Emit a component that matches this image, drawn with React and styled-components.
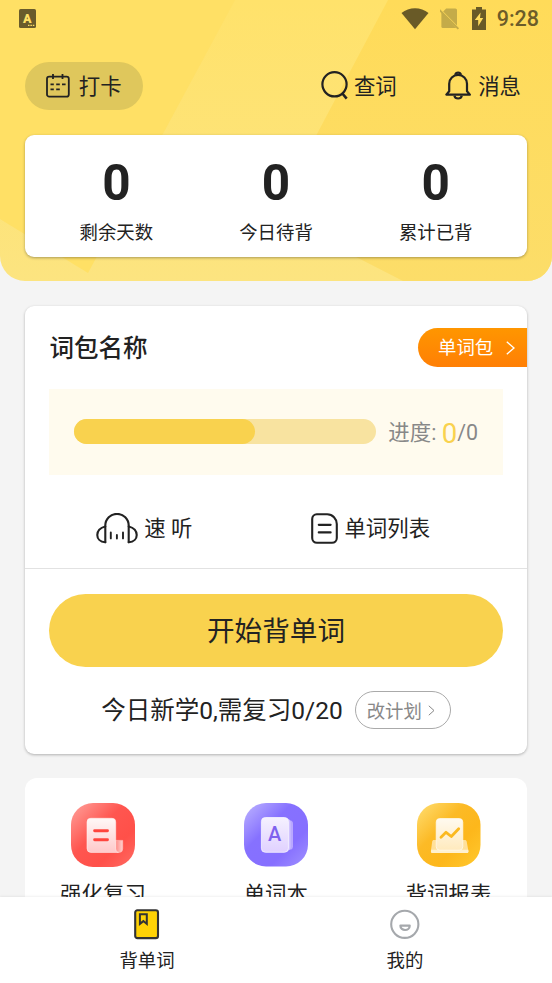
import styled, { createGlobalStyle } from 'styled-components';

const stats = [
  { value: 0, label: '剩余天数' },
  { value: 0, label: '今日待背' },
  { value: 0, label: '累计已背' },
];

const CalendarIcon = () => (
  <svg width="24" height="24" viewBox="0 0 24 24" fill="none" stroke="#222" strokeWidth="1.8">
    <rect x="1" y="2.6" width="21.8" height="20" rx="2.2" />
    <path d="M7 0v5M16.5 0v5" />
    <path d="M4.5 10.4h3.3M10.2 10.4h3.6M16 10.4h3.6M4.5 15.3h3.3M10.2 15.3h3.6" />
  </svg>
);

const SearchIcon = () => (
  <svg width="27" height="29" viewBox="0 0 27 29" fill="none" stroke="#222" strokeWidth="2.2">
    <circle cx="13.5" cy="13.3" r="12.1" />
    <path d="M20.9 22l4.8 5.6" strokeWidth="2.6" />
  </svg>
);

const BellIcon = () => (
  <svg width="27" height="29" viewBox="0 0 27 29" fill="none" stroke="#222" strokeWidth="2.2" strokeLinejoin="round">
    <path d="M10.2 3.8a3 3 0 0 1 5.8 0" />
    <path d="M4.2 20.2v-7.5a8.9 8.9 0 0 1 17.8 0v7.5l2.9 3.4H1.3z" />
    <path d="M9.4 24.8c.8 3.6 6.6 3.6 7.4 0" />
  </svg>
);

const HeadphoneIcon = () => (
  <svg width="42" height="31" viewBox="0 0 42 31" fill="none" stroke="#222" strokeWidth="2.1" strokeLinecap="round" strokeLinejoin="round">
    <path d="M9.3 29.3V12.6a11.7 11.7 0 0 1 23.4 0v16.7" />
    <path d="M9.3 13.4C-1.4 15.8-1.4 28.6 9.3 29.3" />
    <path d="M32.7 13.4c10.7 2.4 10.7 15.2 0 15.9" />
    <path d="M14.8 19.4v6M20.9 21.9v3.6M27 19.4v6" strokeWidth="1.9" />
  </svg>
);

const ListIcon = () => (
  <svg width="27" height="31" viewBox="0 0 27 31" fill="none" stroke="#222" strokeWidth="2.1" strokeLinecap="round">
    <path d="M5.8 1.2h10.4c5.4 0 9.6 4.6 9.6 9.8V25a4.8 4.8 0 0 1-4.8 4.8H6A4.8 4.8 0 0 1 1.2 25V6a4.8 4.8 0 0 1 4.6-4.8z" />
    <path d="M7.8 11.8h11.8M7.8 19.4h11.8" strokeWidth="2.2" />
  </svg>
);

const ChevronIcon = ({ width, height, strokeWidth = 1.4 }) => (
  <svg width={width} height={height} viewBox={`0 0 ${width} ${height}`} fill="none" stroke="currentColor" strokeWidth={strokeWidth}>
    <path d={`M.8.8L${width - 1} ${height / 2}L.8 ${height - 0.8}`} />
  </svg>
);

const AppBadgeIcon = () => (
  <svg width="17" height="19" viewBox="0 0 17 19">
    <rect width="17" height="19" rx="1.6" fill="#695b2b" />
    <text x="8.2" y="13.6" textAnchor="middle" fontFamily="Roboto" fontSize="12.5" fontWeight="900" fill="#ffe066">A</text>
    <path d="M9 16.4h1.5M11.4 16.4h1.5M13.8 16.4h1.5" stroke="#ffe066" strokeWidth="1.3" />
  </svg>
);

const WifiIcon = () => (
  <svg width="28" height="22" viewBox="0 0 28 22" fill="#695a27">
    <path d="M.5 4.9C8-1.4 20-1.4 27.5 4.9L14 21.3z" />
  </svg>
);

const NoSimIcon = () => (
  <svg width="21" height="22" viewBox="0 0 21 22">
    <path d="M6.2.4h9.2A1.6 1.6 0 0 1 17 2v15.6L3.2 3.4z" fill="#c4ab49" />
    <path d="M1.4 4.2v14.4a1.5 1.5 0 0 0 1.5 1.5h13.4z" fill="#c4ab49" />
    <path d="M-.6 1.9l19 19" stroke="#c4ab49" strokeWidth="1.9" />
  </svg>
);

const BatteryIcon = () => (
  <svg width="14" height="23" viewBox="0 0 14 23">
    <path d="M4 0h6v2.4h4V23H0V2.4h4z" fill="#695a27" />
    <path d="M8.6 5.4L2.8 13h3.4v6.2l5-8.3H8z" fill="#ffdc5c" />
  </svg>
);

const ReviewIcon = () => (
  <svg width="64" height="64" viewBox="0 0 64 64">
    <defs>
      <linearGradient id="reviewBg" x1="0" y1="0" x2="1" y2="1">
        <stop offset="0" stopColor="#ffa39d" />
        <stop offset=".42" stopColor="#ff5650" />
        <stop offset=".7" stopColor="#ff5049" />
        <stop offset="1" stopColor="#ff6c64" />
      </linearGradient>
      <linearGradient id="reviewPaper" x1="0" y1="0" x2="0" y2="1">
        <stop offset="0" stopColor="#fff8f7" />
        <stop offset="1" stopColor="#ffc9ca" />
      </linearGradient>
      <linearGradient id="reviewCurl" x1="0" y1="0" x2="1" y2="0">
        <stop offset="0" stopColor="#ff8984" />
        <stop offset="1" stopColor="#ffd0cf" />
      </linearGradient>
    </defs>
    <rect width="64" height="64" rx="22" fill="url(#reviewBg)" />
    <path d="M44.5 37.4h7.2v8.4a3.6 3.6 0 0 1-7.2 0z" fill="url(#reviewCurl)" stroke="#ffc2c0" strokeWidth=".6" />
    <path d="M19.8 15.3h21.3a3.6 3.6 0 0 1 3.6 3.6v27c0 1.8 1 3.4 2.8 3.5H20a4 4 0 0 1-4-4V19a3.7 3.7 0 0 1 3.8-3.7z" fill="url(#reviewPaper)" stroke="#fff0ef" strokeWidth=".6" />
    <path d="M23.6 27.7h12.9M23.6 36.7h12.9" stroke="#ff453e" strokeWidth="2.9" strokeLinecap="round" />
  </svg>
);

const WordBookIcon = () => (
  <svg width="64" height="64" viewBox="0 0 64 64">
    <defs>
      <linearGradient id="bookBg" x1="0" y1="0" x2="1" y2="1">
        <stop offset="0" stopColor="#beb5ff" />
        <stop offset=".38" stopColor="#8671ff" />
        <stop offset=".7" stopColor="#866fff" />
        <stop offset="1" stopColor="#a092ff" />
      </linearGradient>
      <linearGradient id="bookPage" x1="0" y1="0" x2="0" y2="1">
        <stop offset="0" stopColor="#f5f1ff" />
        <stop offset="1" stopColor="#e0d1ff" />
      </linearGradient>
    </defs>
    <rect width="64" height="63.5" rx="22" fill="url(#bookBg)" />
    <rect x="28" y="17.2" width="21" height="29.6" rx="3.5" fill="#b9a8ff" />
    <rect x="26" y="15.8" width="20.5" height="32" rx="3.8" fill="#d1c4ff" />
    <rect x="17.4" y="14.5" width="27" height="34.8" rx="4" fill="url(#bookPage)" stroke="#f8f5ff" strokeWidth=".8" />
    <text x="30.6" y="38" textAnchor="middle" fontFamily="Roboto" fontSize="20" fontWeight="500" fill="#7f62ee">A</text>
  </svg>
);

const ReportIcon = () => (
  <svg width="64" height="64" viewBox="0 0 64 64">
    <defs>
      <linearGradient id="reportBg" x1="0" y1="0" x2="1" y2="1">
        <stop offset="0" stopColor="#ffdf74" />
        <stop offset=".38" stopColor="#fcba26" />
        <stop offset=".65" stopColor="#fdb71b" />
        <stop offset="1" stopColor="#ffc92f" />
      </linearGradient>
      <linearGradient id="reportPaper" x1="0" y1="0" x2="0" y2="1">
        <stop offset="0" stopColor="#fffaf0" />
        <stop offset="1" stopColor="#ffeabd" />
      </linearGradient>
    </defs>
    <rect width="63.5" height="64" rx="22" fill="url(#reportBg)" />
    <path d="M17 37h30.8c1 0 1.7.7 1.9 1.6l1.7 9.5c.2 1-.5 1.8-1.5 1.8H15.4c-1 0-1.7-.8-1.5-1.8l1.3-9.5c.1-1 .8-1.6 1.8-1.6z" fill="#ffe09a" />
    <path d="M14.2 46.8h37l.3 1.8c0 .8-.6 1.5-1.4 1.5H15.3c-.9 0-1.4-.7-1.3-1.5z" fill="#fff1cf" />
    <rect x="19.2" y="15.5" width="26.6" height="31.7" rx="3.6" fill="url(#reportPaper)" stroke="#fffaf0" strokeWidth=".7" />
    <path d="M24 34.2l5-4.9 5.3 4.2 7.4-7.8" fill="none" stroke="#fbb91f" strokeWidth="2.8" strokeLinecap="round" strokeLinejoin="round" />
  </svg>
);

const BookTabIcon = () => (
  <svg width="26" height="31" viewBox="0 0 26 31" fill="none" stroke="#333" strokeWidth="2.1">
    <rect x="1.2" y="1.3" width="22.8" height="27.8" rx="2.2" fill="#ffd205" />
    <path d="M5.9 5.3h6.9v9.6l-3.4-2.8-3.5 2.8z" strokeWidth="2" />
  </svg>
);

const MineTabIcon = () => (
  <svg width="30" height="31" viewBox="0 0 30 31" fill="none" stroke="#a5a8ac" strokeWidth="2.1">
    <circle cx="14.8" cy="15.3" r="13.6" />
    <path d="M10.4 16.7h9.3c0 5.7-9.3 5.7-9.3 0z" strokeWidth="2.2" strokeLinejoin="round" />
  </svg>
);

const HeaderPattern = () => (
  <Pattern viewBox="0 0 552 281" preserveAspectRatio="none">
    <defs>
      <linearGradient id="band" x1="0" y1="0" x2="0" y2="1">
        <stop offset="0" stopColor="#ffe26b" />
        <stop offset="1" stopColor="#fce480" />
      </linearGradient>
      <linearGradient id="right" x1="0" y1="0" x2="0" y2="1">
        <stop offset="0" stopColor="#ffdb59" />
        <stop offset="1" stopColor="#fcdd69" />
      </linearGradient>
    </defs>
    <rect width="552" height="281" fill="url(#band)" />
    <path d="M0 0h235L88 273L0 219z" fill="#ffe065" />
    <path d="M388 0h164v281H403L274 215z" fill="url(#right)" />
  </Pattern>
);

const features = [
  { label: '强化复习', Icon: ReviewIcon },
  { label: '单词本', Icon: WordBookIcon },
  { label: '背词报表', Icon: ReportIcon },
];

const App = () => {
  return (
    <>
      <GlobalStyle />
      <Screen>
        <Content>
          <Header>
            <HeaderPattern />
            <StatusBar>
              <AppBadgeIcon />
              <StatusIcons>
                <WifiIcon />
                <NoSimIcon />
                <BatteryIcon />
                <Clock>9:28</Clock>
              </StatusIcons>
            </StatusBar>
            <Toolbar>
              <CheckIn>
                <CalendarIcon />
                <Label>打卡</Label>
              </CheckIn>
              <ToolbarLinks>
                <ToolbarLink>
                  <SearchIcon />
                  <Label>查词</Label>
                </ToolbarLink>
                <ToolbarLink>
                  <BellIcon />
                  <Label>消息</Label>
                </ToolbarLink>
              </ToolbarLinks>
            </Toolbar>
            <StatsCard>
              {stats.map((item) => (
                <Stat key={item.label}>
                  <StatValue>{item.value}</StatValue>
                  <StatLabel>{item.label}</StatLabel>
                </Stat>
              ))}
            </StatsCard>
          </Header>

          <PlanCard>
            <PlanHead>
              <PlanTitle>词包名称</PlanTitle>
              <PackTag>
                单词包
                <ChevronIcon width={9} height={14} />
              </PackTag>
            </PlanHead>
            <ProgressBox>
              <ProgressTrack>
                <ProgressFill style={{ width: '60%' }} />
              </ProgressTrack>
              <ProgressText>
                进度: <ProgressDone>0</ProgressDone>/0
              </ProgressText>
            </ProgressBox>
            <Actions>
              <Action>
                <HeadphoneIcon />
                <Label>速 听</Label>
              </Action>
              <Action>
                <ListIcon />
                <Label>单词列表</Label>
              </Action>
            </Actions>
            <StartArea>
              <StartButton>开始背单词</StartButton>
              <TodayRow>
                <Label>今日新学0,需复习0/20</Label>
                <EditPlan>
                  <Label>改计划</Label>
                  <ChevronIcon width={7} height={11} strokeWidth={1} />
                </EditPlan>
              </TodayRow>
            </StartArea>
          </PlanCard>

          <FeatureCard>
            {features.map(({ label, Icon }) => (
              <Feature key={label}>
                <Icon />
                <FeatureLabel>{label}</FeatureLabel>
              </Feature>
            ))}
          </FeatureCard>
        </Content>
        <TabBar>
          <Tab>
            <BookTabIcon />
            背单词
          </Tab>
          <Tab>
            <MineTabIcon />
            我的
          </Tab>
        </TabBar>
      </Screen>
    </>
  );
};

const GlobalStyle = createGlobalStyle`
  * {
    box-sizing: border-box;
  }
  body {
    margin: 0;
    background: #f4f4f4;
    color: #222;
    font-family: Roboto, 'Noto Sans CJK SC', sans-serif;
  }
  svg {
    display: block;
    flex-shrink: 0;
  }
  button {
    border: 0;
    padding: 0;
    font-family: inherit;
    color: inherit;
  }
`;

const Screen = styled.div`
  display: flex;
  flex-direction: column;
  width: 552px;
  height: 983px;
  overflow: hidden;
`;

const Content = styled.main`
  flex: 1;
  min-height: 0;
  overflow: hidden;
`;

const Header = styled.header`
  position: relative;
  isolation: isolate;
  height: 281px;
  border-radius: 0 0 25px 25px;
  overflow: hidden;
`;

const Pattern = styled.svg`
  position: absolute;
  inset: 0;
  z-index: -1;
  width: 100%;
  height: 100%;
`;

const StatusBar = styled.div`
  display: flex;
  align-items: center;
  justify-content: space-between;
  height: 37px;
  padding: 0 13px 0 19px;
`;

const StatusIcons = styled.div`
  display: flex;
  align-items: center;
  gap: 11px;
`;

const Clock = styled.span`
  padding-top: 1px;
  font-size: 21.5px;
  font-weight: 500;
  line-height: 24px;
  color: #6c5c29;
`;

const Toolbar = styled.div`
  display: flex;
  align-items: center;
  justify-content: space-between;
  height: 47.5px;
  margin-top: 25px;
  padding: 0 31px 0 24.5px;
`;

const CheckIn = styled.button`
  display: flex;
  align-items: center;
  justify-content: center;
  gap: 9px;
  width: 118.5px;
  height: 47.5px;
  border-radius: 24px;
  background: #dfc75c;
  font-size: 21.4px;
  line-height: 32px;
`;

const Label = styled.span`
  padding-top: 2px;
`;

const ToolbarLinks = styled.div`
  display: flex;
  gap: 48.5px;
`;

const ToolbarLink = styled.div`
  display: flex;
  align-items: center;
  gap: 6px;
  font-size: 21.4px;
  line-height: 32px;
`;

const StatsCard = styled.section`
  display: flex;
  height: 122px;
  margin: 25.5px 25px 0 24.5px;
  padding: 0 11.5px 0 12px;
  border-radius: 9px;
  background: #fff;
  box-shadow: 0 1px 3px rgba(0, 0, 0, 0.32);
`;

const Stat = styled.div`
  flex: 1;
  display: flex;
  flex-direction: column;
  align-items: center;
`;

const StatValue = styled.span`
  margin-top: 19px;
  font-size: 49.5px;
  font-weight: 700;
  line-height: 58px;
`;

const StatLabel = styled.span`
  margin-top: 7px;
  font-size: 18.4px;
  line-height: 28px;
`;

const PlanCard = styled.section`
  height: 448px;
  margin: 25px 25px 0 24.5px;
  border-radius: 9px;
  background: #fff;
  box-shadow: 0 1px 3px rgba(0, 0, 0, 0.28);
`;

const PlanHead = styled.div`
  display: flex;
  align-items: center;
  justify-content: space-between;
  padding: 22px 0 0 25px;
`;

const PlanTitle = styled.h1`
  margin: 0;
  padding-top: 2px;
  font-size: 24.5px;
  font-weight: 500;
  line-height: 36px;
`;

const PackTag = styled.div`
  display: flex;
  align-items: center;
  gap: 13px;
  width: 109px;
  height: 39px;
  padding-left: 20px;
  border-radius: 20px 0 0 20px;
  background: linear-gradient(#ff9600, #ff7f05);
  color: #fff;
  font-size: 18.4px;
  line-height: 27px;
`;

const ProgressBox = styled.div`
  display: flex;
  align-items: center;
  justify-content: space-between;
  height: 86px;
  margin: 22px 24.5px 0;
  padding: 0 24.5px 2px 24.5px;
  background: #fffbee;
`;

const ProgressTrack = styled.div`
  width: 302px;
  height: 25px;
  border-radius: 13px;
  background: #f8e3a0;
`;

const ProgressFill = styled.div`
  height: 100%;
  border-radius: 13px;
  background: #f9d24e;
`;

const ProgressText = styled.div`
  padding-top: 4px;
  font-size: 21.4px;
  line-height: 32px;
  color: #888;
  white-space: nowrap;
`;

const ProgressDone = styled.span`
  font-size: 27.6px;
  line-height: 0;
  vertical-align: -2.5px;
  color: #f9d24e;
`;

const Actions = styled.div`
  display: grid;
  grid-template-columns: 239px 214px;
  height: 94px;
  padding-top: 13px;
  border-bottom: 1px solid #e2e2e2;
`;

const Action = styled.div`
  display: flex;
  align-items: center;
  justify-content: center;
  gap: 6.5px;
  font-size: 21.4px;
  line-height: 32px;
`;

const StartArea = styled.div`
  padding: 24.5px 24px 0 24.5px;
`;

const StartButton = styled.button`
  display: block;
  width: 100%;
  height: 73.5px;
  padding-top: 3px;
  border-radius: 37px;
  background: #f9d24e;
  font-size: 27.6px;
  line-height: 40px;
`;

const TodayRow = styled.div`
  display: flex;
  align-items: center;
  justify-content: center;
  gap: 12px;
  margin-top: 24px;
  font-size: 24.5px;
  line-height: 36px;
`;

const EditPlan = styled.button`
  display: flex;
  align-items: center;
  justify-content: center;
  gap: 6px;
  width: 96px;
  height: 38px;
  padding-right: 4px;
  border: 1px solid #aaa;
  border-radius: 19px;
  background: none;
  color: #888;
  font-size: 18.4px;
  line-height: 27px;
`;

const FeatureCard = styled.section`
  display: flex;
  justify-content: space-between;
  margin: 24px 25px 0 24.5px;
  height: 160px;
  padding: 25px 35.5px 0;
  border-radius: 12px;
  background: #fff;
`;

const Feature = styled.div`
  display: flex;
  flex-direction: column;
  align-items: center;
  width: 86px;
`;

const FeatureLabel = styled.span`
  margin-top: 12px;
  font-size: 21.4px;
  line-height: 32px;
  white-space: nowrap;
`;

const TabBar = styled.nav`
  display: flex;
  flex-shrink: 0;
  height: 86px;
  padding: 0 18px;
  background: #fff;
  box-shadow: 0 -1px 2px rgba(0, 0, 0, 0.06);
`;

const Tab = styled.div`
  flex: 1;
  display: flex;
  flex-direction: column;
  align-items: center;
  gap: 7px;
  padding-top: 12px;
  font-size: 18.4px;
  line-height: 27px;
`;

export default App;
